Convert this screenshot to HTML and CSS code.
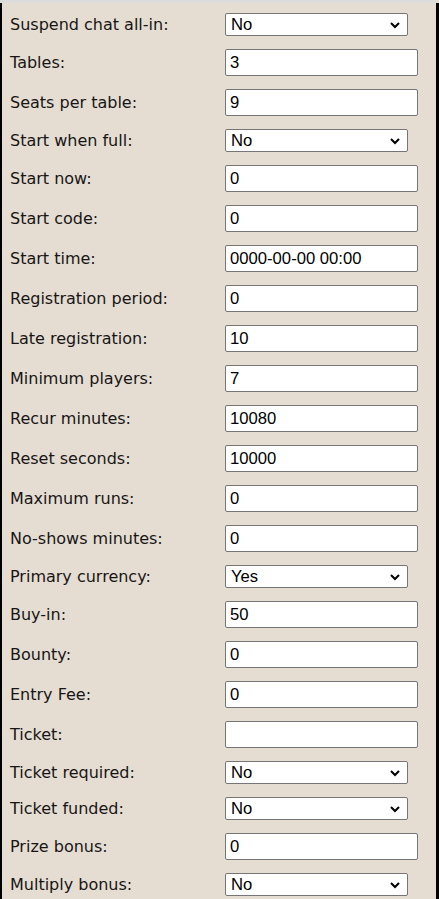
FILE: index.html
```html
<!DOCTYPE html>
<html>
<head>
<meta charset="utf-8">
<link rel="stylesheet" href="styles.css">
</head>
<body>
<div class="topbar"></div>
<form class="panel">
  <div class="row"><label class="lbl">Suspend chat all-in:</label><span class="selwrap"><select class="sel"><option>No</option><option>Yes</option></select><svg class="chev" viewBox="0 0 10 6"><path d="M1 1 L5 5 L9 1"/></svg></span></div>
  <div class="row"><label class="lbl">Tables:</label><input class="inp" type="text" value="3"></div>
  <div class="row"><label class="lbl">Seats per table:</label><input class="inp" type="text" value="9"></div>
  <div class="row"><label class="lbl">Start when full:</label><span class="selwrap"><select class="sel"><option>No</option><option>Yes</option></select><svg class="chev" viewBox="0 0 10 6"><path d="M1 1 L5 5 L9 1"/></svg></span></div>
  <div class="row"><label class="lbl">Start now:</label><input class="inp" type="text" value="0"></div>
  <div class="row"><label class="lbl">Start code:</label><input class="inp" type="text" value="0"></div>
  <div class="row"><label class="lbl">Start time:</label><input class="inp" type="text" value="0000-00-00 00:00"></div>
  <div class="row"><label class="lbl">Registration period:</label><input class="inp" type="text" value="0"></div>
  <div class="row"><label class="lbl">Late registration:</label><input class="inp" type="text" value="10"></div>
  <div class="row"><label class="lbl">Minimum players:</label><input class="inp" type="text" value="7"></div>
  <div class="row"><label class="lbl">Recur minutes:</label><input class="inp" type="text" value="10080"></div>
  <div class="row"><label class="lbl">Reset seconds:</label><input class="inp" type="text" value="10000"></div>
  <div class="row"><label class="lbl">Maximum runs:</label><input class="inp" type="text" value="0"></div>
  <div class="row"><label class="lbl">No-shows minutes:</label><input class="inp" type="text" value="0"></div>
  <div class="row"><label class="lbl">Primary currency:</label><span class="selwrap"><select class="sel"><option>Yes</option><option>No</option></select><svg class="chev" viewBox="0 0 10 6"><path d="M1 1 L5 5 L9 1"/></svg></span></div>
  <div class="row"><label class="lbl">Buy-in:</label><input class="inp" type="text" value="50"></div>
  <div class="row"><label class="lbl">Bounty:</label><input class="inp" type="text" value="0"></div>
  <div class="row"><label class="lbl">Entry Fee:</label><input class="inp" type="text" value="0"></div>
  <div class="row"><label class="lbl">Ticket:</label><input class="inp" type="text" value=""></div>
  <div class="row"><label class="lbl">Ticket required:</label><span class="selwrap"><select class="sel"><option>No</option><option>Yes</option></select><svg class="chev" viewBox="0 0 10 6"><path d="M1 1 L5 5 L9 1"/></svg></span></div>
  <div class="row"><label class="lbl">Ticket funded:</label><span class="selwrap"><select class="sel"><option>No</option><option>Yes</option></select><svg class="chev" viewBox="0 0 10 6"><path d="M1 1 L5 5 L9 1"/></svg></span></div>
  <div class="row"><label class="lbl">Prize bonus:</label><input class="inp" type="text" value="0"></div>
  <div class="row"><label class="lbl">Multiply bonus:</label><span class="selwrap"><select class="sel"><option>No</option><option>Yes</option></select><svg class="chev" viewBox="0 0 10 6"><path d="M1 1 L5 5 L9 1"/></svg></span></div>
</form>
</body>
</html>
```

FILE: styles.css
```css
html, body {
  margin: 0;
  padding: 0;
  background: #e6ddd2;
  overflow: hidden;
}
.topbar {
  height: 3px;
  background: #dcdcdc;
  margin-right: 3px;
}
.panel {
  display: flex;
  flex-direction: column;
  gap: 13px;
  margin: 0;
  width: 439px;
  min-height: 900px;
  padding: 10px 0 0 8px;
  box-sizing: border-box;
  border-left: 2px solid #000;
  border-right: 3px solid #000;
  background: #e6ddd2;
}
.row {
  display: grid;
  grid-template-columns: 215px 1fr;
  align-items: center;
}
.lbl {
  font-family: "DejaVu Sans", Verdana, sans-serif;
  font-size: 16px;
  color: #161616;
}
.inp {
  box-sizing: border-box;
  width: 193px;
  height: 27px;
  margin: 0;
  padding: 0 4px;
  border: 1px solid #767676;
  border-radius: 2px;
  background: #fff;
  font-family: "Liberation Sans", Arial, sans-serif;
  font-size: 16.67px;
  color: #000;
}
.selwrap {
  position: relative;
  display: block;
  width: 183px;
  height: 23px;
}
.sel {
  -webkit-appearance: none;
  appearance: none;
  display: block;
  box-sizing: border-box;
  width: 183px;
  height: 23px;
  margin: 0;
  padding: 0 0 0 5px;
  border: 1px solid #767676;
  border-radius: 2px;
  background: #fff;
  font-family: "Liberation Sans", Arial, sans-serif;
  font-size: 16.67px;
  line-height: 21px;
  color: #000;
}
.chev {
  position: absolute;
  right: 8px;
  top: 9px;
  width: 10px;
  height: 6px;
  overflow: visible;
  pointer-events: none;
}
.chev path {
  fill: none;
  stroke: #000;
  stroke-width: 2;
}
```
